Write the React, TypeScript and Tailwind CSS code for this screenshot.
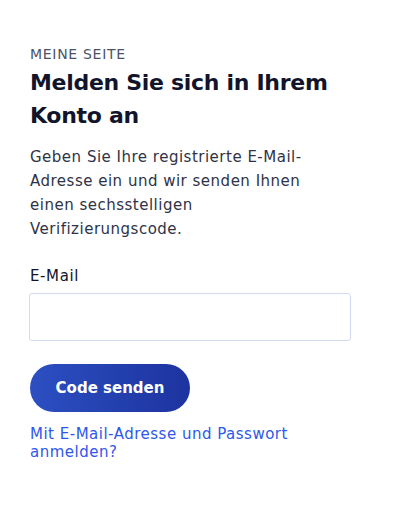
import React from 'react';

const App = () => {
  return (
    <div className="min-h-screen bg-white font-['DejaVu_Sans',sans-serif]">
      <div className="w-[352px] pl-[30px] pt-[44px]">
        <p className="text-[14px] leading-[20px] tracking-[0.7px] text-[#4b5268]">MEINE SEITE</p>
        <h1 className="mt-[2px] text-[22px] leading-[33px] font-bold tracking-[-0.3px] text-[#12142b]">
          Melden Sie sich in Ihrem Konto an
        </h1>
        <p className="mt-[13px] w-[300px] text-[15px] leading-[24px] tracking-[0.5px] text-[#2e3347]">
          Geben Sie Ihre registrierte E-Mail-Adresse ein und wir senden Ihnen einen sechsstelligen Verifizierungscode.
        </p>
        <form className="mt-[24px]" onSubmit={(e) => e.preventDefault()}>
          <label className="block text-[15px] leading-[22px] tracking-[0.6px] text-[#12142b]">E-Mail</label>
          <input
            type="email"
            className="mt-[6px] -ml-px block h-[48px] w-[322px] rounded-[3px] border border-[#d3dbf2] bg-white px-3 outline-none"
          />
          <button
            type="submit"
            className="mt-[23px] h-[48px] w-[160px] rounded-full bg-gradient-to-r from-[#2c4fc2] to-[#1d339f] text-[15px] font-bold text-white"
          >
            Code senden
          </button>
          <a href="#" className="mt-[13px] block text-[15px] leading-[18px] tracking-[0.5px] text-[#2e57ec]">
            Mit E-Mail-Adresse und Passwort anmelden?
          </a>
        </form>
      </div>
    </div>
  );
};

export default App;
